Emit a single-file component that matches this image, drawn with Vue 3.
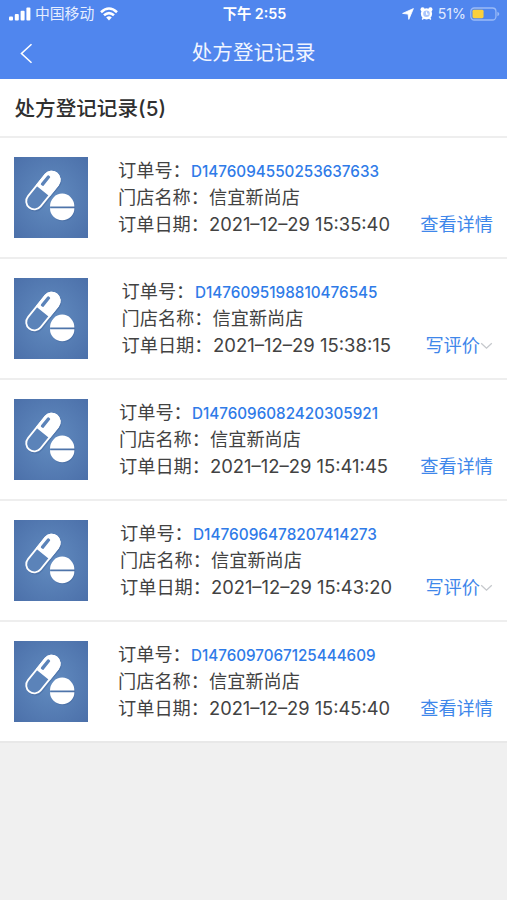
<script setup>
const title = '处方登记记录'
const records = [
  { id: 'D1476094550253637633', date: '2021–12–29 15:35:40', reviewed: true, left: 118, idWidth: 188, dateWidth: 181 },
  { id: 'D1476095198810476545', date: '2021–12–29 15:38:15', reviewed: false, left: 121.5, idWidth: 182.5, dateWidth: 178 },
  { id: 'D1476096082420305921', date: '2021–12–29 15:41:45', reviewed: true, left: 119, idWidth: 186, dateWidth: 178 },
  { id: 'D1476096478207414273', date: '2021–12–29 15:43:20', reviewed: false, left: 120, idWidth: 184, dateWidth: 181 },
  { id: 'D1476097067125444609', date: '2021–12–29 15:45:40', reviewed: true, left: 118, idWidth: 184.5, dateWidth: 181 },
]
</script>

<template>
  <main class="page">
    <header class="header">
      <div class="status">
        <div class="carrier">
          <svg class="signal" viewBox="0 0 22 14">
            <rect x="0" y="9.5" width="4" height="4" rx="1" />
            <rect x="5.8" y="7" width="4" height="6.5" rx="1" />
            <rect x="11.6" y="3.8" width="4" height="9.7" rx="1" />
            <rect x="17.4" y="0.5" width="4" height="13" rx="1" />
          </svg>
          <span class="carrier-name">中国移动</span>
          <svg class="wifi" viewBox="0 0 18 14">
            <path d="M1 5.2Q9 -2.2 17 5.2M4 8.3Q9 3.8 14 8.3" />
            <path class="solid" d="M6.2 10.4Q9 8 11.8 10.4L9 13.4Z" />
          </svg>
        </div>
        <span class="time">下午 2:55</span>
        <div class="power">
          <svg class="location" viewBox="0 0 12 12"><path d="M11.4.6 6.8 11.4 6.1 6.1.6 5.4Z" /></svg>
          <svg class="alarm" viewBox="0 0 13 13">
            <circle cx="2.6" cy="2.4" r="2.1" /><circle cx="10.4" cy="2.4" r="2.1" />
            <path d="m2.2 12.4 2-2.4m6.6 2.4-2-2.4" />
            <circle cx="6.5" cy="6.8" r="5.6" />
            <circle class="face" cx="6.5" cy="6.8" r="3.3" />
            <path class="hands" d="M6.5 4.5v2.6h1.9" />
          </svg>
          <span class="percent">51%</span>
          <svg class="battery" viewBox="0 0 31 14">
            <rect class="shell" x=".8" y=".8" width="26" height="12.4" rx="3.6" />
            <rect class="charge" x="2.6" y="2.6" width="11.4" height="8.8" rx="1.5" />
            <path class="tip" d="M28.3 4.6q2 1 2 2.4t-2 2.4z" />
          </svg>
        </div>
      </div>
      <nav class="nav">
        <svg class="back" viewBox="0 0 14 22"><path d="M12.4 1 1.6 11l10.8 10" /></svg>
        <h1>{{ title }}</h1>
      </nav>
    </header>

    <h2 class="heading">{{ title }}({{ records.length }})</h2>

    <section class="list">
      <article v-for="r in records" :key="r.id" class="record">
        <svg class="thumb" viewBox="0 0 74 81" preserveAspectRatio="none">
          <defs>
            <radialGradient :id="'bg-' + r.id" r=".75">
              <stop offset="0" stop-color="#628cc0" />
              <stop offset="1" stop-color="#4a6ea8" />
            </radialGradient>
          </defs>
          <rect width="74" height="81" :fill="'url(#bg-' + r.id + ')'" />
          <g class="shade" transform="translate(.8 1.3)">
            <rect x="-9" y="-22.8" width="18" height="45.6" rx="9" transform="translate(29 33.5) rotate(39)" />
            <ellipse cx="48.2" cy="49.9" rx="12.2" ry="13.1" />
          </g>
          <g transform="translate(29 33.5) rotate(39)">
            <rect class="pill-body" x="-8.1" y="-21.9" width="16.2" height="43.8" rx="8.1" />
            <path class="pill-cap" d="M-9 .4V-13.8A9 9 0 0 1 9-13.8V.4Z" />
            <rect class="pill-shine" x="-6" y="-15.4" width="3.4" height="12.2" rx="1.2" />
          </g>
          <path class="tablet" d="M36 49.5A12.2 12.9 0 0 1 60.4 49.5ZM36 51.3H60.4A12.2 11.9 0 0 1 36 51.3Z" />
        </svg>
        <div class="info" :style="{ marginLeft: r.left - 88 + 'px' }">
          <div class="line">
            <span class="label short">订单号：</span>
            <svg class="number" :width="r.idWidth + 4" height="27">
              <text x="0" y="19.5" :textLength="r.idWidth" lengthAdjust="spacingAndGlyphs">{{ r.id }}</text>
            </svg>
          </div>
          <div class="line"><span class="label">门店名称：</span><span>信宜新尚店</span></div>
          <div class="line">
            <span class="label">订单日期：</span>
            <svg class="date" :width="r.dateWidth + 4" height="27">
              <text x="0" y="20" :textLength="r.dateWidth" lengthAdjust="spacingAndGlyphs">{{ r.date }}</text>
            </svg>
          </div>
        </div>
        <a class="action">
          <template v-if="r.reviewed">查看详情</template>
          <template v-else>写评价<svg class="chevron" viewBox="0 0 13 8"><path d="m1.2 1.2 5.3 5 5.3-5" /></svg></template>
        </a>
      </article>
    </section>
  </main>
</template>

<style>
body { background: #f0f0f0; }
</style>

<style scoped>
.page {
  width: 507px;
  min-height: 900px;
  background: #f0f0f0;
  color: #424242;
  font-family: Inter, "Noto Sans CJK SC", sans-serif;
}
svg { display: block; flex: none; overflow: visible; }
.header { height: 79px; background: #5086ee; color: #fff; }
.status {
  display: grid;
  grid-template-columns: 1fr auto 1fr;
  align-items: center;
  height: 27px;
  padding: 0 7px 0 9px;
}
.carrier, .power { display: flex; align-items: center; }
.power { justify-content: flex-end; }
.signal { width: 22px; height: 14px; fill: #fff; }
.carrier-name { margin-left: 4px; font-size: 14.8px; line-height: 20px; color: #e6eeff; }
.wifi { width: 18px; height: 14px; margin-left: 6px; fill: none; stroke: #fff; stroke-width: 2.6; }
.wifi .solid { fill: #fff; stroke: none; }
.time { font-size: 14.3px; font-weight: 600; line-height: 20px; }
.location { width: 12px; height: 12px; fill: #fff; stroke: #fff; stroke-width: .8; stroke-linejoin: round; }
.alarm { width: 13px; height: 13px; margin-left: 6px; fill: #fff; }
.alarm path { stroke: #fff; stroke-width: 1.5; }
.alarm .face { fill: #a9c4fb; }
.alarm .hands { fill: none; stroke: #fff; stroke-width: 1.1; }
.percent { margin-left: 5px; font-size: 14.2px; line-height: 20px; color: #e0eaff; }
.battery { width: 30px; height: 14px; margin-left: 4px; }
.battery .shell { fill: none; stroke: #9abbf7; stroke-width: 1.3; }
.battery .charge { fill: #fbd03c; }
.battery .tip { fill: #9abbf7; }
.nav {
  display: grid;
  grid-template-columns: 1fr auto 1fr;
  align-items: center;
  height: 52px;
  padding: 0 20px;
}
.back { width: 13px; height: 21px; fill: none; stroke: #fff; stroke-width: 1.7; }
.nav h1 { margin: 0; font-size: 20.6px; font-weight: 400; line-height: 30px; color: #f1f5ff; }
.heading {
  box-sizing: border-box;
  height: 59px;
  margin: 0;
  padding-left: 14.5px;
  border-bottom: 2px solid #eee;
  background: #fff;
  color: #303030;
  font-size: 20.6px;
  font-weight: 500;
  line-height: 60px;
}
.record {
  display: flex;
  align-items: flex-start;
  box-sizing: border-box;
  height: 121px;
  padding: 19px 14px 0;
  border-bottom: 2px solid #eee;
  background: #fff;
}
.record:last-child { border-bottom-color: #e8e8e8; }
.thumb { width: 74px; height: 81px; }
.shade { fill: #395b91; opacity: .35; }
.pill-body { fill: #5b83b9; stroke: #fff; stroke-width: 1.8; }
.pill-cap { fill: #fff; }
.pill-shine { fill: #5b83b9; }
.tablet { fill: #fff; }
.line { display: flex; height: 27px; font-size: 18.2px; line-height: 27px; white-space: nowrap; }
.label { width: 91px; }
.label.short { width: 73px; }
.number { fill: #2f7be8; font-size: 16px; font-weight: 500; }
.date { fill: #424242; font-size: 18.4px; }
.action {
  display: flex;
  align-items: center;
  margin-left: auto;
  padding-top: 54px;
  color: #3f87ea;
  font-size: 18.2px;
  line-height: 27px;
  white-space: nowrap;
}
.chevron { width: 13px; height: 8px; fill: none; stroke: #c5c8cc; stroke-width: 1.3; }
</style>
